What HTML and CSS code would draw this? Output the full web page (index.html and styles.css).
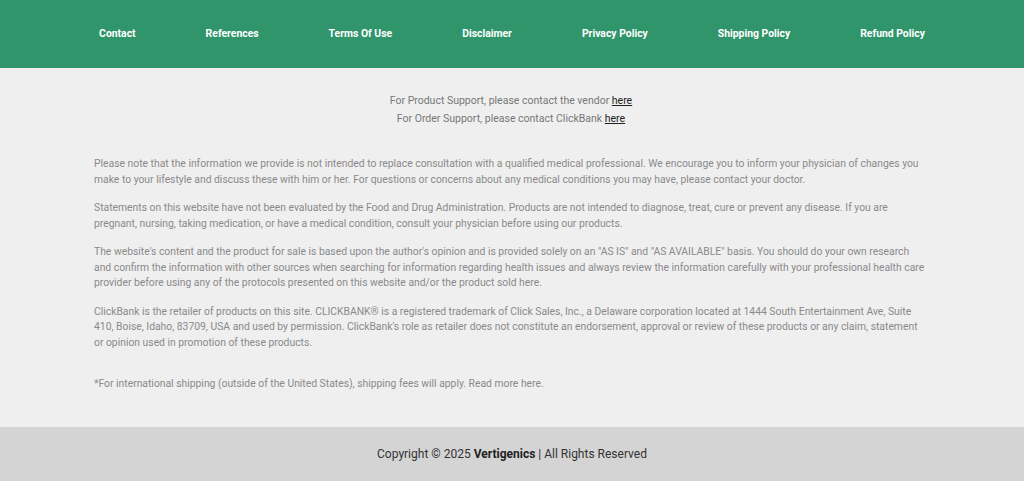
FILE: index.html
```html
<!DOCTYPE html>
<html lang="en">
<head>
<meta charset="utf-8">
<title>Vertigenics</title>
<link rel="stylesheet" href="styles.css">
</head>
<body>
<nav class="topnav">
  <a class="navlink" href="#">Contact</a>
  <a class="navlink" href="#">References</a>
  <a class="navlink" href="#">Terms Of Use</a>
  <a class="navlink" href="#">Disclaimer</a>
  <a class="navlink" href="#">Privacy Policy</a>
  <a class="navlink" href="#">Shipping Policy</a>
  <a class="navlink" href="#">Refund Policy</a>
</nav>
<main class="content">
  <div class="support">
    <p>For Product Support, please contact the vendor <a href="#">here</a></p>
    <p>For Order Support, please contact ClickBank <a href="#">here</a></p>
  </div>
  <div class="disclaimers">
    <p>Please note that the information we provide is not intended to replace consultation with a qualified medical professional. We encourage you to inform your physician of changes you make to your lifestyle and discuss these with him or her. For questions or concerns about any medical conditions you may have, please contact your doctor.</p>
    <p>Statements on this website have not been evaluated by the Food and Drug Administration. Products are not intended to diagnose, treat, cure or prevent any disease. If you are pregnant, nursing, taking medication, or have a medical condition, consult your physician before using our products.</p>
    <p>The website's content and the product for sale is based upon the author's opinion and is provided solely on an "AS IS" and "AS AVAILABLE" basis. You should do your own research and confirm the information with other sources when searching for information regarding health issues and always review the information carefully with your professional health care provider before using any of the protocols presented on this website and/or the product sold here.</p>
    <p>ClickBank is the retailer of products on this site. CLICKBANK® is a registered trademark of Click Sales, Inc., a Delaware corporation located at 1444 South Entertainment Ave, Suite 410, Boise, Idaho, 83709, USA and used by permission. ClickBank's role as retailer does not constitute an endorsement, approval or review of these products or any claim, statement or opinion used in promotion of these products.</p>
    <p class="shipping">*For international shipping (outside of the United States), shipping fees will apply. Read more here.</p>
  </div>
</main>
<footer class="footer">
  <p>Copyright © 2025 <strong>Vertigenics</strong> | All Rights Reserved</p>
</footer>
</body>
</html>
```
FILE: styles.css
```css
* { box-sizing: border-box; }
html, body { margin: 0; padding: 0; }
body {
  font-family: Roboto, "Liberation Sans", Arial, sans-serif;
  background: #efefef;
  min-height: 481px;
  display: flex;
  flex-direction: column;
}
.topnav {
  background: #31956b;
  height: 68px;
  display: flex;
  justify-content: center;
  align-items: center;
  gap: 70px;
  padding-bottom: 2px;
}
.navlink {
  color: #ffffff;
  font-weight: 700;
  font-size: 10.4px;
  text-decoration: none;
}
.content {
  flex: 1;
  padding: 24px 96px 22px 94px;
}
.support {
  text-align: center;
  font-size: 10.5px;
  line-height: 18px;
  color: #777;
}
.support p { margin: 0; }
.support a { color: #222; text-decoration: underline; }
.disclaimers {
  margin-top: 28px;
  font-size: 10.35px;
  line-height: 15.5px;
  color: #8a8a8a;
}
.disclaimers p { margin: 0 0 13px; }
.disclaimers .shipping { margin-top: 26px; }
.footer {
  background: #d4d4d4;
  height: 54px;
  display: flex;
  align-items: center;
  justify-content: center;
  font-size: 12px;
  color: #333;
}
.footer p { margin: 0; }
.footer strong { color: #222; }
```
